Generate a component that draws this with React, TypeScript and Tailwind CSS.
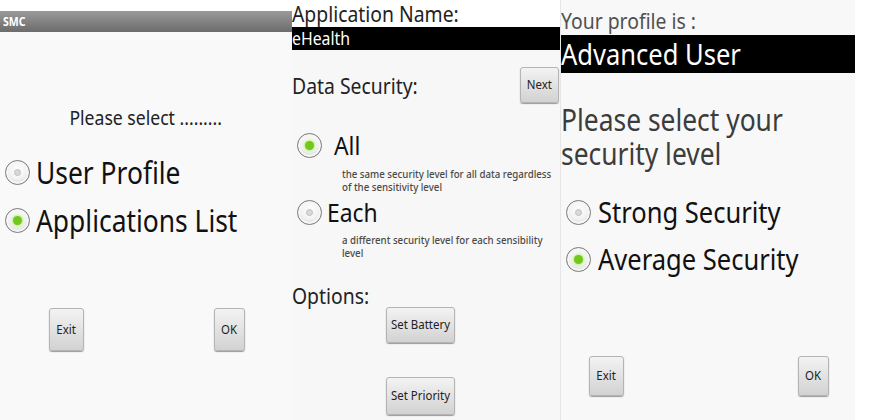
import type { ReactNode } from 'react';

const font = { fontFamily: '"Noto Sans", "Open Sans", sans-serif' };

// the screenshot is squeezed sideways, so text is narrowed a bit
const Sq = ({ children, center = false }: { children: ReactNode; center?: boolean }) => (
  <span
    className={`inline-block whitespace-nowrap scale-x-[0.88] ${center ? 'origin-center' : 'origin-left'}`}
  >
    {children}
  </span>
);

const Radio = ({ checked, size = 25 }: { checked?: boolean; size?: number }) => (
  <span
    className="flex shrink-0 items-center justify-center rounded-full border-[1.5px] border-[#7a7a7a] bg-[radial-gradient(circle_at_50%_40%,#ffffff_0%,#f2f2f2_50%,#bdbdbd_100%)] shadow-[inset_0_0_0_2px_#f6f6f6]"
    style={{ width: size, height: size }}
  >
    {checked ? (
      <span className="h-[9px] w-[9px] rounded-full bg-[#72c81a] shadow-[0_0_3px_1px_#b6ec7c]" />
    ) : (
      <span className="h-[7px] w-[7px] rounded-full border border-[#c0c0c0] bg-[#d8d8d8]" />
    )}
  </span>
);

const Btn = ({ label, w, h }: { label: string; w: number; h: number }) => (
  <div
    className="flex shrink-0 items-center justify-center rounded-[3px] border border-[#b4b4b4] bg-gradient-to-b from-[#f3f3f3] to-[#d2d2d2] text-[13px] text-[#222] shadow-[0_1px_1px_#9a9a9a]"
    style={{ width: w, height: h }}
  >
    <Sq center>{label}</Sq>
  </div>
);

export default function App() {
  return (
    <div className="flex h-[420px] w-[882px] overflow-hidden bg-white" style={font}>
      {/* SMC home */}
      <div className="flex w-[292px] shrink-0 flex-col bg-[#f9f9f9]">
        <div className="h-[11px] bg-white" />
        <div className="flex h-[21px] items-center bg-gradient-to-b from-[#9a9a9a] to-[#6c6c6c] pl-[3px] text-[12px] font-bold text-white">
          <Sq>SMC</Sq>
        </div>
        <div className="mt-[74px] text-center text-[20px] leading-[24px] text-[#222]">
          <Sq center>Please select .........</Sq>
        </div>
        <div className="mt-[22px] flex flex-col gap-[8px] pl-[5px] text-[30px] text-[#111]">
          <div className="flex h-[40px] items-center gap-[6px]">
            <Radio />
            <Sq>User Profile</Sq>
          </div>
          <div className="flex h-[40px] items-center gap-[6px]">
            <Radio checked />
            <Sq>Applications List</Sq>
          </div>
        </div>
        <div className="mt-[68px] flex justify-between pl-[49px] pr-[47px]">
          <Btn label="Exit" w={35} h={43} />
          <Btn label="OK" w={31} h={43} />
        </div>
      </div>

      {/* Application settings */}
      <div className="flex w-[269px] shrink-0 flex-col border-r border-[#e6e6e6] bg-[#f7f7f7]">
        <div className="h-[27px] bg-white text-[22px] leading-[27px] text-[#222]">
          <Sq>Application Name:</Sq>
        </div>
        <div className="h-[23px] bg-black text-[18px] leading-[23px] text-white">
          <Sq>eHealth</Sq>
        </div>
        <div className="mt-[17px] flex h-[36px] items-center justify-between pr-[1px]">
          <span className="text-[22px] text-[#222]">
            <Sq>Data Security:</Sq>
          </span>
          <Btn label="Next" w={39} h={36} />
        </div>
        <div className="mt-[27px] flex h-[30px] items-center gap-[12px] pl-[5px] text-[26px] text-[#111]">
          <Radio checked size={25} />
          <Sq>All</Sq>
        </div>
        <div className="mt-[7px] pl-[50px] text-[11px] leading-[13px] font-medium text-[#4a4a4a]">
          <div><Sq>the same security level for all data regardless</Sq></div>
          <div><Sq>of the sensitivity level</Sq></div>
        </div>
        <div className="mt-[4px] flex h-[30px] items-center gap-[5px] pl-[5px] text-[26px] text-[#111]">
          <Radio size={25} />
          <Sq>Each</Sq>
        </div>
        <div className="mt-[7px] pl-[50px] text-[11px] leading-[12px] font-medium text-[#4a4a4a]">
          <div><Sq>a different security level for each sensibility</Sq></div>
          <div className="mt-[1px]"><Sq>level</Sq></div>
        </div>
        <div className="mt-[24px] h-[24px] text-[22px] leading-[24px] text-[#222]">
          <Sq>Options:</Sq>
        </div>
        <div className="flex flex-col gap-[34px] pl-[94px]">
          <Btn label="Set Battery" w={69} h={36} />
          <Btn label="Set Priority" w={69} h={38} />
        </div>
      </div>

      {/* Security level */}
      <div className="flex w-[294px] shrink-0 flex-col bg-[#f8f8f8] pt-[7px]">
        <div className="h-[28px] text-[22px] leading-[27px] text-[#505050]">
          <Sq>Your profile is :</Sq>
        </div>
        <div className="h-[38px] bg-black text-[29px] leading-[38px] text-white">
          <Sq>Advanced User</Sq>
        </div>
        <div className="mt-[30px] text-[30px] leading-[34px] text-[#3c3c3c]">
          <div><Sq>Please select your</Sq></div>
          <div><Sq>security level</Sq></div>
        </div>
        <div className="mt-[26px] flex h-[30px] items-center gap-[7px] pl-[5px] text-[29px] text-[#111]">
          <Radio />
          <Sq>Strong Security</Sq>
        </div>
        <div className="mt-[17px] flex h-[30px] items-center gap-[7px] pl-[5px] text-[29px] text-[#111]">
          <Radio checked />
          <Sq>Average Security</Sq>
        </div>
        <div className="mt-[82px] flex justify-between pl-[28px] pr-[26px]">
          <Btn label="Exit" w={35} h={40} />
          <Btn label="OK" w={31} h={40} />
        </div>
      </div>
    </div>
  );
}
